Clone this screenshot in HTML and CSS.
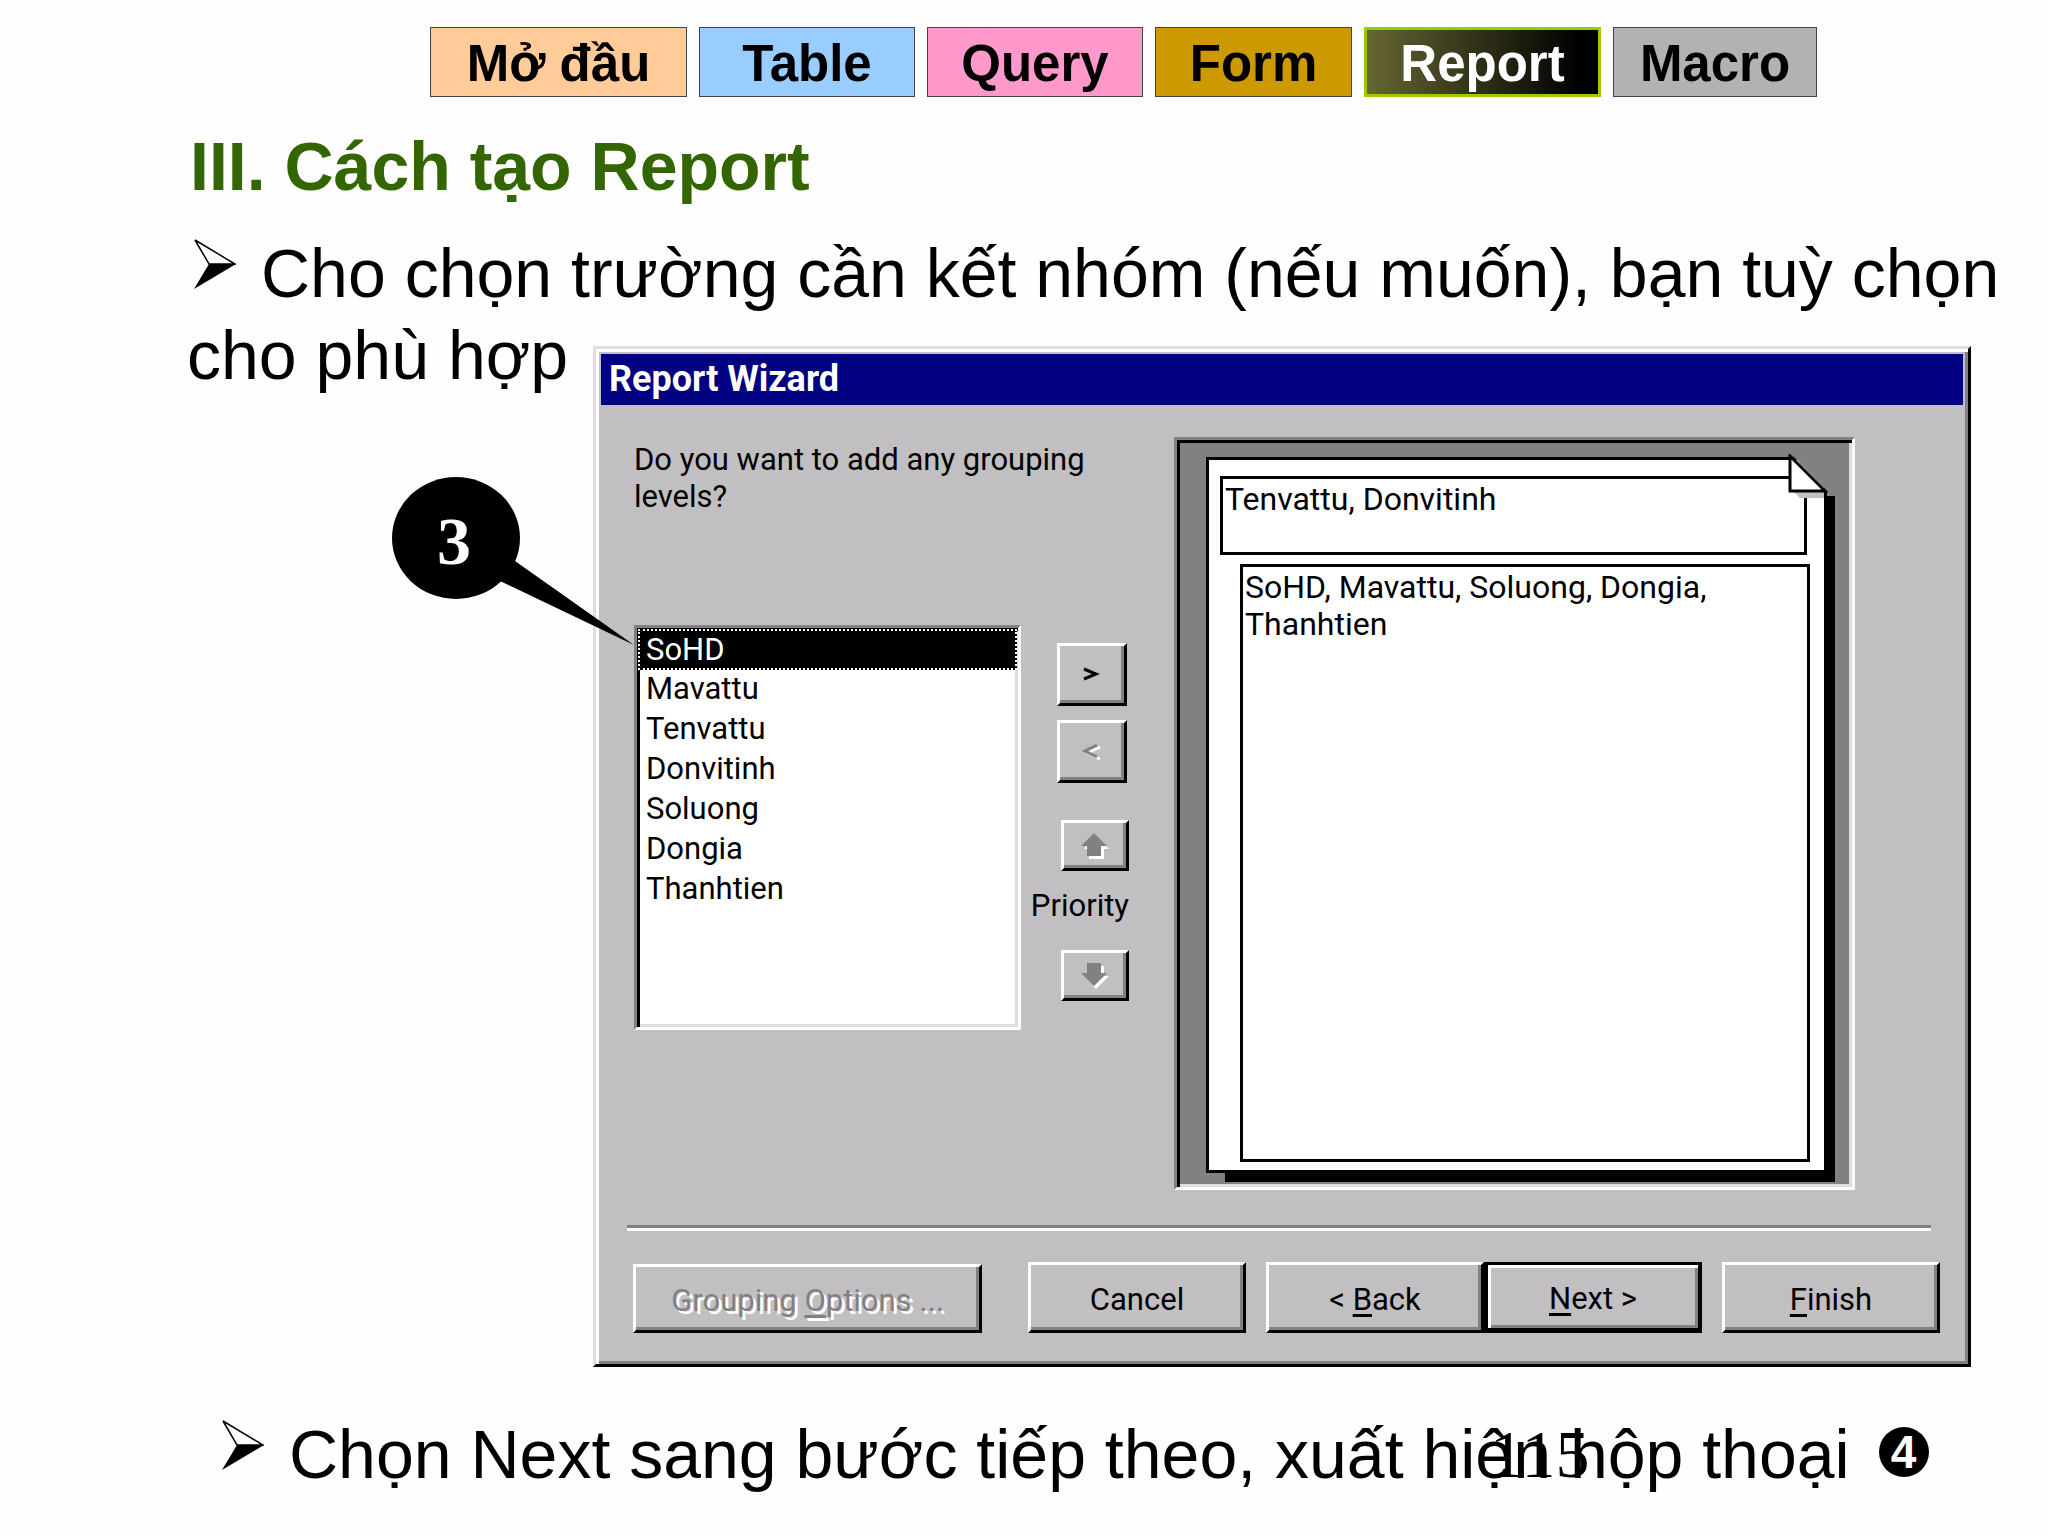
FILE: index.html
```html
<!DOCTYPE html>
<html lang="vi">
<head>
  <meta charset="UTF-8">
  <meta name="viewport" content="width=device-width, initial-scale=1.0">
  <title>III. Cách tạo Report</title>
  <link rel="stylesheet" href="styles.css">
</head>
<body>
  <main class="slide">
    <nav class="tabs">
      <a href="#" class="tab tab-intro">Mở đầu</a>
      <a href="#" class="tab tab-table">Table</a>
      <a href="#" class="tab tab-query">Query</a>
      <a href="#" class="tab tab-form">Form</a>
      <a href="#" class="tab tab-report">Report</a>
      <a href="#" class="tab tab-macro">Macro</a>
    </nav>

    <h1 class="title">III. Cách tạo Report</h1>

    <p class="point">
      <svg class="bullet" viewBox="0 0 42 50" aria-hidden="true">
        <path d="M1 1 L41 25 L15 25 Z" fill="#fff" stroke="#000" stroke-width="1.5"/>
        <path d="M15 25 L42 25 L0 50 Z"/>
      </svg>Cho chọn trường cần kết nhóm (nếu muốn), bạn tuỳ chọn cho phù hợp
    </p>

    <section class="dialog" aria-label="Report Wizard">
      <h2 class="dialog-title">Report Wizard</h2>

      <div class="dialog-body">
        <div class="chooser">
          <label class="question" for="fields">Do you want to add any grouping levels?</label>
          <div class="chooser-row">
            <select class="fields" id="fields" size="7">
              <option selected>SoHD</option>
              <option>Mavattu</option>
              <option>Tenvattu</option>
              <option>Donvitinh</option>
              <option>Soluong</option>
              <option>Dongia</option>
              <option>Thanhtien</option>
            </select>
            <div class="controls">
              <button class="btn btn-move" aria-label="Add level">
                <svg viewBox="0 0 20 16" width="20" height="16"><path d="M2 2 L14 7 L2 12" fill="none" stroke="#000" stroke-width="3"/></svg>
              </button>
              <button class="btn btn-move" aria-label="Remove level" disabled>
                <svg viewBox="0 0 20 18" width="20" height="18"><path d="M18 4 L6 10 L18 16" fill="none" stroke="#fff" stroke-width="3"/><path d="M15 2 L3 8 L15 14" fill="none" stroke="#828082" stroke-width="3"/></svg>
              </button>
              <button class="btn btn-priority btn-up" aria-label="Priority up" disabled>
                <svg viewBox="0 0 28 26" width="28" height="26"><path d="M15 3 L28 16 H23 V26 H8 V16 H3 Z" fill="#fff"/><path d="M13 0 L26 13 H20 V23 H6 V13 H0 Z" fill="#828082"/></svg>
              </button>
              <span class="priority">Priority</span>
              <button class="btn btn-priority" aria-label="Priority down" disabled>
                <svg viewBox="0 0 28 26" width="28" height="26"><path d="M8 3 H23 V13 H28 L15 26 L12 23 Z" fill="#fff"/><path d="M6 0 H20 V10 H26 L13 23 L0 10 H6 Z" fill="#828082"/></svg>
              </button>
            </div>
          </div>
        </div>

        <div class="preview">
          <div class="paper">
            <div class="group-box">Tenvattu, Donvitinh</div>
            <div class="detail-box">SoHD, Mavattu, Soluong, Dongia, Thanhtien</div>
            <svg class="fold" viewBox="0 0 40 44" aria-hidden="true">
              <path d="M3 0 H40 V38 Z" fill="#828082"/>
              <path d="M6 38 H36 V44 H12 Z" fill="#c1bfc2"/>
              <path d="M2 2 V37 H37 Z" fill="#fff" stroke="#000" stroke-width="3"/>
            </svg>
          </div>
        </div>
      </div>

      <hr class="divider">

      <div class="dialog-footer">
        <button class="btn btn-text btn-options" disabled>Grouping <u>O</u>ptions ...</button>
        <button class="btn btn-text">Cancel</button>
        <div class="btn-pair">
          <button class="btn btn-text">&lt; <u>B</u>ack</button>
          <button class="btn btn-text btn-default"><u>N</u>ext &gt;</button>
        </div>
        <button class="btn btn-text"><u>F</u>inish</button>
      </div>

      <!-- step number pointing at the selected field -->
      <svg class="callout" viewBox="0 0 244 170">
        <ellipse cx="64" cy="61" rx="64" ry="61"/>
        <path d="M123 84 L242 168 L108 104 Z"/>
        <text x="62" y="87" text-anchor="middle">3</text>
      </svg>
    </section>

    <p class="point point-next">
      <svg class="bullet" viewBox="0 0 42 50" aria-hidden="true">
        <path d="M1 1 L41 25 L15 25 Z" fill="#fff" stroke="#000" stroke-width="1.5"/>
        <path d="M15 25 L42 25 L0 50 Z"/>
      </svg>Chọn Next sang bước tiếp theo, xuất hiện hộp thoại <span class="step">4</span>
      <span class="page-number">115</span>
    </p>
  </main>
</body>
</html>
```
FILE: styles.css
```css
:root {
  --face: #c1bfc2;
  --shade: #828082;
  --light: #dfdde0;
  --navy: #000080;
  --green: #336600;
}

* {
  margin: 0;
  padding: 0;
  box-sizing: border-box;
}

body {
  font-family: "Liberation Sans", Arial, sans-serif;
  background-color: #fefefe;
  color: #000;
}

.slide {
  padding: 27px 0 24px;
}

/* Tabs */
.tabs {
  display: flex;
  gap: 12px;
  padding-left: 430px;
}

.tab {
  width: 216px;
  height: 70px;
  border: 1px solid #444;
  color: #000;
  font-size: 51px;
  font-weight: bold;
  line-height: 72px;
  text-align: center;
  text-decoration: none;
}

.tab-intro {
  width: 257px;
  background-color: #ffcc99;
}

.tab-table {
  background-color: #99ccff;
}

.tab-query {
  background-color: #ff99cc;
}

.tab-form {
  width: 197px;
  background-color: #cc9900;
}

.tab-report {
  width: 237px;
  border: 3px solid #99cc00;
  background: linear-gradient(to right, #666633, #000 92%);
  color: #fff;
  line-height: 68px;
}

.tab-macro {
  width: 204px;
  background-color: #b2b2b2;
}

/* Slide text */
.title {
  margin: 28px 0 25px;
  padding-left: 190px;
  color: var(--green);
  font-size: 68px;
  line-height: 82px;
}

.point {
  padding: 0 24px 0 187px;
  font-size: 68px;
  line-height: 82px;
}

.bullet {
  width: 42px;
  height: 50px;
  margin: 0 25px 0 7px;
  vertical-align: 8px;
}

.point-next {
  position: relative;
  margin-top: 46px;
  padding-left: 215px;
}

.step {
  display: inline-block;
  width: 50px;
  height: 50px;
  margin: -16px 0 0 10px;
  border-radius: 50%;
  background-color: #000;
  color: #fff;
  font-size: 46px;
  font-weight: bold;
  line-height: 50px;
  text-align: center;
  vertical-align: middle;
}

.page-number {
  position: absolute;
  left: 1490px;
  top: 0;
  font-family: "Liberation Serif", "Times New Roman", serif;
}

/* Wizard dialog */
.dialog {
  position: relative;
  margin: -50px 77px 0 593px;
  padding: 5px 0 31px;
  border: 3px solid;
  border-color: var(--light) #000 #000 var(--light);
  background-color: var(--face);
  box-shadow: inset 3px 3px #fff, inset -3px -3px var(--shade);
  font-family: Roboto, Tahoma, sans-serif;
  font-size: 31px;
  line-height: 37px;
}

.dialog-title {
  margin: 0 5px;
  padding-left: 8px;
  background-color: var(--navy);
  color: #fff;
  font-size: 36px;
  line-height: 51px;
}

.dialog-body {
  display: grid;
  grid-template-columns: 495fr 681fr;
  gap: 45px;
  padding: 32px 113px 0 38px;
}

.question {
  display: block;
  height: 188px;
  padding-top: 4px;
}

.chooser-row {
  display: flex;
  gap: 14px;
}

.fields {
  flex: 1;
  height: 405px;
  padding: 1px;
  border: 3px solid;
  border-color: var(--shade) #fff #fff var(--shade);
  border-radius: 0;
  outline: none;
  overflow: hidden;
  background-color: #fff;
  box-shadow: inset 3px 3px #000, inset -3px -3px var(--light);
  font: inherit;
}

.fields option {
  height: 40px;
  padding: 0 8px;
  color: #000;
  line-height: 40px;
}

.fields option:checked {
  height: 41px;
  border: 2px dotted #fff;
  padding: 0 6px;
  background: #000 linear-gradient(#000, #000);
  color: #fff;
  line-height: 37px;
}

.controls {
  display: flex;
  flex-direction: column;
  align-items: flex-end;
  width: 94px;
  padding-top: 18px;
}

.priority {
  margin: 16px 0 26px;
}

.btn {
  display: flex;
  align-items: center;
  justify-content: center;
  border: 3px solid;
  border-color: #fff #000 #000 #fff;
  background-color: var(--face);
  box-shadow: inset -3px -3px var(--shade);
  color: #000;
  font: inherit;
  white-space: pre;
}

.btn u {
  text-decoration-thickness: 3px;
  text-underline-offset: 4px;
}

.btn-move {
  width: 70px;
  height: 63px;
  margin: 0 2px 14px 0;
}

.btn-priority {
  width: 68px;
  height: 51px;
}

.btn-up {
  margin-top: 23px;
}

/* Report preview */
.preview {
  height: 753px;
  padding: 17px 25px 14px 29px;
  border: 3px solid;
  border-color: var(--shade) #fff #fff var(--shade);
  background-color: var(--shade);
  box-shadow: inset 3px 3px #000, inset -3px -3px var(--light);
}

.paper {
  display: flex;
  flex-direction: column;
  gap: 9px;
  position: relative;
  z-index: 0;
  height: 716px;
  padding: 16px 14px 8px 11px;
  border: 3px solid #000;
  background-color: #fff;
  font-size: 32px;
}

/* hard drop shadow, shorter than the sheet on both sides */
.paper::before {
  content: "";
  position: absolute;
  z-index: -2;
  left: 16px;
  top: 36px;
  right: -11px;
  bottom: -12px;
  background-color: #000;
}

.paper::after {
  content: "";
  position: absolute;
  z-index: -1;
  inset: 0;
  background-color: #fff;
}

.group-box,
.detail-box {
  padding: 2px;
  border: 3px solid #000;
}

.group-box {
  height: 79px;
  margin-right: 3px;
}

.detail-box {
  flex: 1;
  margin-left: 20px;
}

.fold {
  position: absolute;
  top: -6px;
  right: -4px;
  width: 40px;
  height: 44px;
}

.divider {
  height: 6px;
  margin: 35px 37px 31px 31px;
  border: 0;
  border-top: 3px solid var(--shade);
  border-bottom: 3px solid #fff;
}

.dialog-footer {
  display: flex;
  align-items: flex-end;
  gap: 20px;
  padding: 0 28px 0 37px;
}

.btn-text {
  width: 218px;
  height: 71px;
  padding-top: 4px;
}

.btn-options {
  width: 349px;
  height: 69px;
  margin-right: auto;
  color: var(--shade);
  text-shadow: 3px 3px #fff;
}

.btn-pair {
  display: flex;
}

.btn-default {
  border-color: #000;
  border-width: 3px 4px 5px;
  box-shadow: inset 3px 3px #fff, inset -3px -3px var(--shade);
}

/* Callout */
.callout {
  position: absolute;
  left: -204px;
  top: 128px;
  width: 244px;
  height: 170px;
}

.callout text {
  fill: #fff;
  font-family: "Liberation Serif", "Times New Roman", serif;
  font-size: 68px;
  font-weight: bold;
}
```
